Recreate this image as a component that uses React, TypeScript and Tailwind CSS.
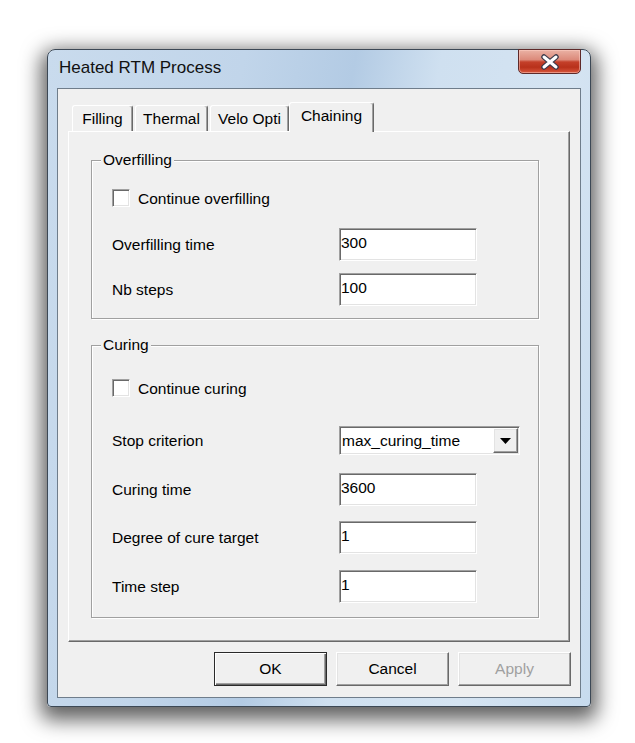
import React from "react";

const sunken =
  "border border-t-[#a0a0a0] border-l-[#a0a0a0] border-r-white border-b-white shadow-[inset_1px_1px_0_#696969,inset_-1px_-1px_0_#e3e3e3]";
const raised =
  "border border-t-white border-l-white border-r-[#696969] border-b-[#696969] shadow-[inset_-1px_-1px_0_#a0a0a0,inset_1px_1px_0_#e3e3e3]";

function Field({ label, value, className = "" }: { label: string; value: string; className?: string }) {
  return (
    <div className={`flex items-center h-[33px] ${className}`}>
      <span className="w-[227px] pt-[1px]">{label}</span>
      <div className={`w-[138px] h-[33px] bg-white ${sunken} pl-[1px] pt-[4px] leading-[20px]`}>{value}</div>
    </div>
  );
}

function Check({ label }: { label: string }) {
  return (
    <div className="flex items-center h-[18px] gap-[8px]">
      <div className={`w-[18px] h-[18px] bg-white ${sunken}`} />
      <span className="leading-[18px] pt-[2px]">{label}</span>
    </div>
  );
}

function Group({ title, className = "", children }: { title: string; className?: string; children: React.ReactNode }) {
  return (
    <div
      className={`relative ml-[22px] w-[448px] border border-[#a0a0a0] shadow-[inset_1px_1px_0_#fff,1px_1px_0_#fff] pl-[20px] flex flex-col ${className}`}
    >
      <span className="absolute left-[9px] -top-[10px] bg-[#f0f0f0] px-[2px] leading-[18px]">{title}</span>
      {children}
    </div>
  );
}

function Tab({ label, className = "" }: { label: string; className?: string }) {
  return (
    <div
      className={`h-[26px] border-l border-t border-r border-l-white border-t-white border-r-[#696969] shadow-[inset_-1px_0_0_#a0a0a0] rounded-t-[3px] bg-[#f0f0f0] flex items-center justify-center pt-[1px] ${className}`}
    >
      {label}
    </div>
  );
}

export default function App() {
  return (
    <div className="w-[635px] h-[743px] bg-white pt-[49px] pl-[47px] font-['Liberation_Sans',Arial,sans-serif] text-[15.5px] text-black">
      <div className="w-[544px] h-[658px] rounded-t-[8px] rounded-b-[4px] border border-[#3c4855] shadow-[0_7px_20px_6px_rgba(0,0,0,0.62)] bg-[linear-gradient(100deg,#c9dbed_0%,#c1d5ea_30%,#b3cbe4_47%,#cfe0f0_60%,#d5e4f2_80%,#c7dbee_100%)] flex flex-col">
        <div className="h-[38px] flex items-start justify-between shrink-0">
          <div className="pl-[11px] pt-[8px] text-[17px] leading-[20px] text-[#111]">Heated RTM Process</div>
          <div className="mr-[9px] -mt-px w-[63px] h-[25px] rounded-b-[5px] border border-[#5e2a2a] bg-[linear-gradient(180deg,#eab2a5_0%,#dc8a7a_42%,#c4402a_52%,#b8311b_75%,#d9583e_100%)] shadow-[inset_0_0_0_1px_rgba(255,210,200,0.5)] flex items-center justify-center">
            <svg width="22" height="16" viewBox="0 0 22 16">
              <path d="M5 3 L17 13 M17 3 L5 13" stroke="#3a3a4a" strokeWidth="5.5" strokeLinecap="round" />
              <path d="M5 3 L17 13 M17 3 L5 13" stroke="#ffffff" strokeWidth="3" strokeLinecap="round" />
            </svg>
          </div>
        </div>
        <div className="mx-[9px] mb-[8px] flex-1 border border-[#6f7d8b] bg-[#f0f0f0] flex flex-col pl-[10px]">
          <div className="mt-[13px] h-[29px] flex items-end">
            <Tab label="Filling" className="ml-[4px] w-[61px]" />
            <Tab label="Thermal" className="ml-[2px] w-[73px]" />
            <Tab label="Velo Opti" className="ml-[2px] w-[79px]" />
            <div className="relative z-10 -mb-px h-[30px] w-[85px] border-l border-t border-r border-l-white border-t-white border-r-[#696969] shadow-[inset_-1px_0_0_#a0a0a0] rounded-t-[3px] bg-[#f0f0f0] flex justify-center pt-[3px] leading-[20px]">
              Chaining
            </div>
          </div>
          <div className="w-[502px] h-[511px] border border-t-white border-l-white border-r-[#696969] border-b-[#696969] shadow-[inset_-1px_-1px_0_#a0a0a0] flex flex-col">
            <Group title="Overfilling" className="mt-[28px] h-[159px] pt-[28px]">
              <Check label="Continue overfilling" />
              <Field label="Overfilling time" value="300" className="mt-[21px]" />
              <Field label="Nb steps" value="100" className="mt-[12px]" />
            </Group>
            <Group title="Curing" className="mt-[26px] h-[273px] pt-[33px]">
              <Check label="Continue curing" />
              <div className="mt-[29px] flex items-center h-[29px]">
                <span className="w-[227px] pt-[1px]">Stop criterion</span>
                <div className={`w-[181px] h-[29px] bg-white ${sunken} flex items-center pl-[2px] pr-[1px]`}>
                  <span className="flex-1 leading-[20px] pt-[1px]">max_curing_time</span>
                  <div className={`w-[25px] h-[25px] bg-[#f0f0f0] ${raised} flex items-center justify-center`}>
                    <svg width="11" height="6" viewBox="0 0 11 6">
                      <path d="M0 0 H11 L5.5 6 Z" fill="#000" />
                    </svg>
                  </div>
                </div>
              </div>
              <Field label="Curing time" value="3600" className="mt-[18px]" />
              <Field label="Degree of cure target" value="1" className="mt-[15px]" />
              <Field label="Time step" value="1" className="mt-[16px]" />
            </Group>
          </div>
          <div className="mt-[10px] flex justify-end gap-[9px] pr-[9px]">
            <div className="w-[113px] h-[34px] border border-[#2a2a2a] shadow-[inset_1px_1px_0_#fff,inset_-1px_-1px_0_#696969,inset_-2px_-2px_0_#a0a0a0] bg-[#f0f0f0] flex items-center justify-center">
              OK
            </div>
            <div className={`w-[113px] h-[34px] ${raised} bg-[#f0f0f0] flex items-center justify-center`}>Cancel</div>
            <div className={`w-[113px] h-[34px] ${raised} bg-[#f0f0f0] flex items-center justify-center text-[#a0a0a0]`}>
              Apply
            </div>
          </div>
        </div>
      </div>
    </div>
  );
}
